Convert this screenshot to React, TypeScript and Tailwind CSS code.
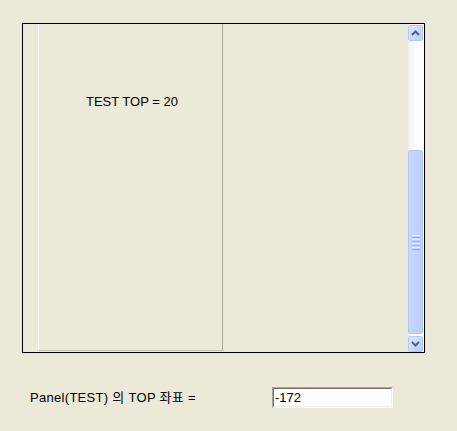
const font = { fontFamily: '"Liberation Sans", "Noto Sans CJK KR", sans-serif' };

const Arrow = ({ up }: { up: boolean }) => (
  <svg width="9" height="6" viewBox="0 0 9 6">
    <path
      d={up ? "M1 5 L4.5 1.5 L8 5" : "M1 1 L4.5 4.5 L8 1"}
      fill="none"
      stroke="#4d6185"
      strokeWidth="2"
    />
  </svg>
);

const ScrollButton = ({ up }: { up: boolean }) => (
  <div className="h-4 w-[15px] rounded-[2px] border border-[#b4c8f6] bg-gradient-to-br from-[#dce7fd] to-[#b9cdf9] flex items-center justify-center">
    <Arrow up={up} />
  </div>
);

const ScrollBar = () => (
  <div className="w-4 h-full flex flex-col bg-gradient-to-r from-[#f3f1ec] via-[#fefefe] to-[#fefefe] pt-[1px]">
    <ScrollButton up />
    <div className="h-[109px]" />
    <div className="flex-1 w-[15px] rounded-[2px] border border-[#b4c8f6] bg-gradient-to-r from-[#c5d6fc] to-[#bdd0fa] flex flex-col items-center justify-center">
      <div className="flex flex-col gap-[1px] w-[8px]">
        <div className="h-[1px] bg-[#eef4fe]" />
        <div className="h-[1px] bg-[#8cb0f8]" />
        <div className="h-[1px] bg-[#eef4fe]" />
        <div className="h-[1px] bg-[#8cb0f8]" />
        <div className="h-[1px] bg-[#eef4fe]" />
        <div className="h-[1px] bg-[#8cb0f8]" />
        <div className="h-[1px] bg-[#eef4fe]" />
        <div className="h-[1px] bg-[#8cb0f8]" />
      </div>
    </div>
    <div className="h-[2px]" />
    <ScrollButton up={false} />
  </div>
);

export default function App() {
  return (
    <div className="w-[457px] h-[431px] bg-[#ece9d8] text-black text-[13px] overflow-hidden" style={font}>
      <div className="pt-[23px] pl-[22px]">
        <div className="w-[403px] h-[330px] border border-black flex bg-[#ece9d8]">
          <div className="w-[15px]" />
          <div className="w-[185px] h-[327px] border-l border-l-white border-r border-r-[#aca899] border-b border-b-[#c9c6b6] pt-[68px] pl-[47px]">
            <span className="leading-4">TEST TOP = 20</span>
          </div>
          <div className="w-[185px]" />
          <ScrollBar />
        </div>
      </div>
      <div className="flex items-center mt-[34px] pl-[30px]">
        <span className="w-[242px] leading-4 tracking-[0.3px]">Panel(TEST) 의 TOP 좌표 =</span>
        <div className="w-[121px] h-[21px] border border-t-[#aca899] border-l-[#aca899] border-r-white border-b-white">
          <div className="h-full border border-t-[#716f64] border-l-[#716f64] border-r-[#f1efe2] border-b-[#f1efe2] bg-white flex items-center pl-[1px] leading-4">
            -172
          </div>
        </div>
      </div>
    </div>
  );
}
